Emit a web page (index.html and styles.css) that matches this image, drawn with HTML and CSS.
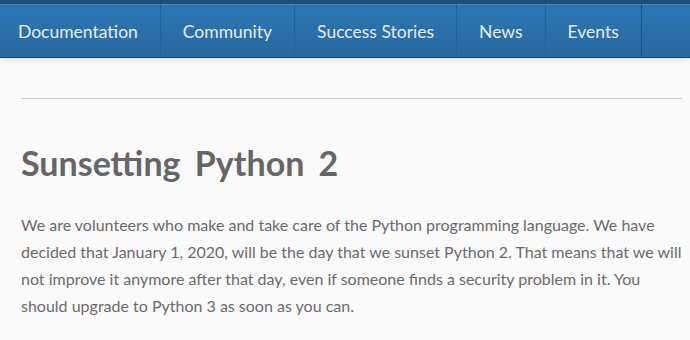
FILE: index.html
```html
<!DOCTYPE html>
<html lang="en">
<head>
  <meta charset="UTF-8" />
  <meta name="viewport" content="width=device-width, initial-scale=1" />
  <title>Sunsetting Python 2</title>
  <link rel="stylesheet" href="styles.css">
</head>
<body>
  <nav class="main-nav">
    <ul class="nav-list">
      <li class="nav-item"><a href="#">Documentation</a></li>
      <li class="nav-item"><a href="#">Community</a></li>
      <li class="nav-item"><a href="#">Success Stories</a></li>
      <li class="nav-item"><a href="#">News</a></li>
      <li class="nav-item"><a href="#">Events</a></li>
    </ul>
  </nav>

  <main class="content">
    <hr class="rule" />
    <h1 class="title">Sunsetting Python 2</h1>
    <p class="lead">We are volunteers who make and take care of the Python programming language. We have decided that January 1, 2020, will be the day that we sunset Python 2. That means that we will not improve it anymore after that day, even if someone finds a security problem in it. You should upgrade to Python 3 as soon as you can.</p>
  </main>
</body>
</html>
```

FILE: styles.css
```css
body {
  margin: 0;
  background-color: #fafafa;
  font-family: Lato, "Liberation Sans", sans-serif;
  color: #666;
}
.main-nav {
  border-top: 4px solid #1f4d7c;
  border-bottom: 1px solid #1d4670;
  background: linear-gradient(#2b77b2, #2a68a0);
  box-shadow: inset 0 1px 0 #3c87c2, 0 2px 6px rgba(0,0,0,0.12);
  height: 53px;
}
.nav-list {
  list-style: none;
  margin: 0 0 0 -4px;
  padding: 0;
  display: flex;
  height: 100%;
}
.nav-item {
  display: flex;
  align-items: center;
  border-right: 1px solid #23619a;
}
.nav-item:last-child {
  border-right-color: #1d5384;
}
.nav-item a {
  color: #e4ecf4;
  text-decoration: none;
  font-size: 17.5px;
  padding: 2px 22px 0;
}
.content {
  padding: 40px 8px 0 21px;
}
.rule {
  margin: 0;
  border: none;
  border-top: 1px solid #cacaca;
}
.title {
  margin: 43px 0 0;
  font-size: 34px;
  font-weight: bold;
  word-spacing: 6px;
  color: #666;
}
.lead {
  margin: 28px 0 0;
  font-size: 16px;
  line-height: 27px;
  color: #6b6b6b;
}
```
